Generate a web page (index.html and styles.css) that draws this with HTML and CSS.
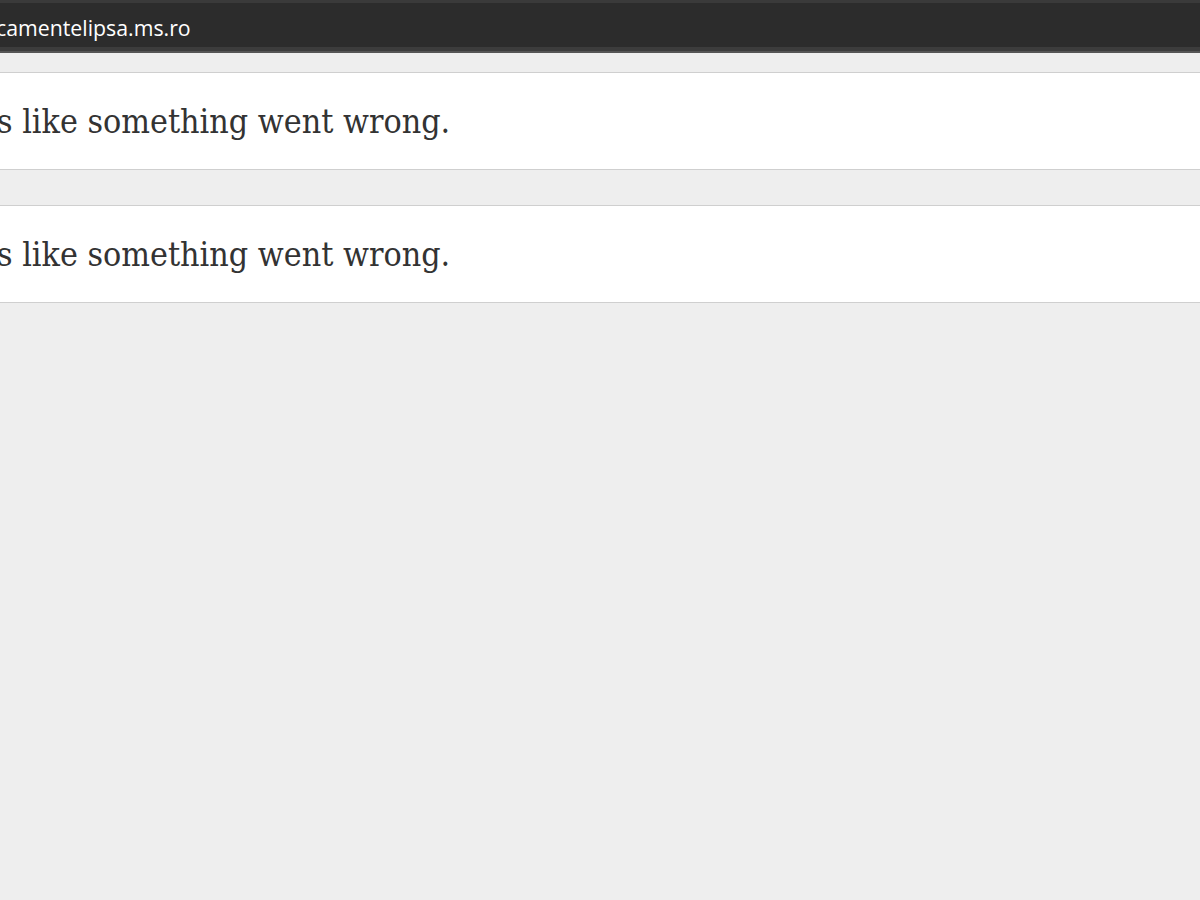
FILE: index.html
```html
<!DOCTYPE html>
<html lang="en">
<head>
<meta charset="utf-8">
<title>Error</title>
<link rel="stylesheet" href="styles.css">
</head>
<body>
<header class="titlebar">
  <span class="url">camentelipsa.ms.ro</span>
</header>
<main class="content">
  <section class="card"><p class="msg">s like something went wrong.</p></section>
  <section class="card"><p class="msg">s like something went wrong.</p></section>
</main>
</body>
</html>
```
FILE: styles.css
```css
html, body {
  margin: 0;
  padding: 0;
  background: #eeeeee;
  overflow: hidden;
}
.titlebar {
  height: 50px;
  background: #2c2c2c;
  border-top: 3px solid #3a3a3a;
  box-shadow: inset 0 -2px 0 #555555, inset 0 -6px 0 #3c3c3c;
  display: flex;
  align-items: center;
  overflow: hidden;
}
.url {
  font-family: "Open Sans", "Noto Sans", sans-serif;
  font-size: 21.3px;
  color: #ffffff;
  margin-left: -4px;
  margin-bottom: 2px;
  white-space: nowrap;
}
.content {
  padding-top: 19px;
  display: flex;
  flex-direction: column;
  gap: 35px;
  overflow: hidden;
}
.card {
  background: #ffffff;
  border-top: 1px solid #cfcfcf;
  border-bottom: 1px solid #cfcfcf;
  height: 96px;
  display: flex;
  align-items: center;
  overflow: hidden;
}
.msg {
  margin: 0 0 0 -3px;
  font-family: "DejaVu Serif Condensed", "DejaVu Serif", Georgia, serif;
  font-stretch: condensed;
  font-size: 33.7px;
  color: #333333;
  white-space: nowrap;
}
```
